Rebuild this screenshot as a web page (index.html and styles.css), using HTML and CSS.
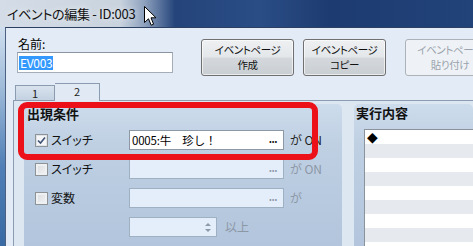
FILE: index.html
```html
<!DOCTYPE html>
<html lang="ja">
<head>
<meta charset="utf-8">
<link rel="stylesheet" href="styles.css">
</head>
<body>
<div class="window">
  <div class="titlebar"><span class="title">イベントの編集 - ID:003</span></div>
  <div class="frame">
    <div class="frame-edge"></div>
    <div class="content">
      <div class="top">
        <div class="name">
          <div class="name-label">名前:</div>
          <div class="name-input"><span class="sel">EV003</span></div>
        </div>
        <div class="buttons">
          <div class="btn btn-w1"><span class="bl">イベントページ</span><span class="bl">作成</span></div>
          <div class="btn btn-w2"><span class="bl">イベントページ</span><span class="bl">コピー</span></div>
          <div class="btn btn-w2 btn-disabled"><span class="bl">イベントページ</span><span class="bl">貼り付け</span></div>
        </div>
      </div>
      <div class="tabs">
        <div class="tab">1</div>
        <div class="tab tab-active">2</div>
      </div>
      <div class="panel">
        <div class="group group-left">
          <div class="group-title">出現条件</div>
          <div class="cond-grid">
            <div class="cond-label"><span class="cb cb-checked"><svg viewBox="0 0 9 9" width="9" height="9"><path d="M1 4.5 L3.5 7 L8 1.5" fill="none" stroke="#3f5276" stroke-width="1.6"/></svg></span>スイッチ</div>
            <div class="field"><span class="field-text">0005:牛　珍し！</span><span class="dots">...</span></div>
            <div class="suffix">が ON</div>

            <div class="cond-label"><span class="cb"></span>スイッチ</div>
            <div class="field field-disabled"><span class="field-text"></span><span class="dots dots-dis">...</span></div>
            <div class="suffix suffix-dis">が ON</div>

            <div class="cond-label"><span class="cb"></span>変数</div>
            <div class="field field-disabled"><span class="field-text"></span><span class="dots dots-dis">...</span></div>
            <div class="suffix suffix-dis">が</div>

            <div class="cond-label"></div>
            <div class="spin-row">
              <div class="spinner"><span class="spin-arrows"><span class="up"></span><span class="down"></span></span></div>
              <div class="suffix suffix-dis">以上</div>
            </div>
            <div></div>
          </div>
        </div>
        <div class="group group-right">
          <div class="group-title group-title-right">実行内容</div>
          <div class="listbox">
            <div class="lrow"><span class="diamond">◆</span></div>
            <div class="lrow"></div>
            <div class="lrow"></div>
            <div class="lrow"></div>
            <div class="lrow"></div>
            <div class="lrow"></div>
            <div class="lrow"></div>
            <div class="lrow"></div>
            <div class="lrow"></div>
          </div>
        </div>
      </div>
    </div>
  </div>
  <div class="redbox"></div>
  <svg class="cursor" width="13" height="21" viewBox="0 0 13 21"><path d="M0.5 0.5 L0.5 16.5 L4.5 12.8 L7.2 19.2 L9.6 18.2 L7 11.8 L12 11.8 Z" fill="#fff" stroke="#000" stroke-width="1"/></svg>
</div>
</body>
</html>
```
FILE: styles.css
```css
* { box-sizing: border-box; }
html, body { margin: 0; padding: 0; }
body {
  width: 473px;
  height: 246px;
  overflow: hidden;
  font-family: "Noto Sans CJK JP", "Liberation Sans", sans-serif;
  font-size: 12px;
  color: #000;
  font-feature-settings: "palt";
}
.window {
  position: relative;
  width: 473px;
  height: 246px;
  overflow: hidden;
  display: flex;
  flex-direction: column;
  background: #c9d9ec;
}
.titlebar {
  height: 27px;
  flex: none;
  display: flex;
  align-items: center;
  padding-left: 7px;
  background: linear-gradient(90deg, #d4dde7 0, #c9d3de 120px, #8ca0bd 145px, #24447a 175px, #2a4d86 260px, #1d3b70 330px, #21437a 473px);
}
.title {
  font-size: 13px;
  line-height: 16px;
  letter-spacing: -0.3px;
  color: #111;
  text-shadow: 0 0 6px rgba(255,255,255,0.8);
}
.frame {
  flex: 1;
  display: flex;
  min-height: 0;
}
.frame-edge {
  width: 5px;
  flex: none;
  background: linear-gradient(180deg, #cfdeee 0, #9fbbd9 60px, #4f7fb6 140px, #3a6aa3 218px);
}
.content {
  flex: 1;
  display: flex;
  flex-direction: column;
  background: #e3ecf6;
  border-left: 1px solid #4d6283;
  border-top: 1px solid #2c4064;
  min-width: 0;
}
.top {
  height: 55px;
  flex: none;
  display: flex;
  padding: 8px 0 0 11px;
}
.name { width: 156px; flex: none; }
.name-label {
  height: 16px;
  line-height: 16px;
  font-size: 12px;
  padding-left: 1px;
}
.name-input {
  height: 21px;
  background: #fff;
  border: 1px solid #a4adb8;
  border-top-color: #8b95a2;
  padding: 2px 1px;
  display: flex;
  align-items: center;
}
.sel {
  background: #3399ff;
  color: #fff;
  font-size: 12px;
  line-height: 14px;
  padding: 0 1px;
  letter-spacing: -0.3px;
}
.buttons {
  display: flex;
  margin-left: 28px;
  padding-top: 3px;
}
.btn {
  height: 37px;
  border: 1px solid #707070;
  border-radius: 3px;
  background: linear-gradient(180deg, #eef0f2 0, #e4e7ea 48%, #d4d8dc 52%, #c9ced3 100%);
  box-shadow: inset 0 0 0 1px rgba(255,255,255,0.6);
  font-size: 10.5px;
  letter-spacing: -0.4px;
  text-align: center;
  padding-top: 2px;
  color: #111;
  flex: none;
  display: flex;
  flex-direction: column;
  align-items: center;
  overflow: hidden;
}
.bl {
  display: block;
  height: 15px;
  line-height: 15px;
  white-space: nowrap;
}
.btn-w1 { width: 93px; }
.btn-w2 { width: 83px; margin-left: 9px; }
.btn-disabled {
  margin-left: 19px;
  width: 90px;
  border-color: #adb2b8;
  background: #eef2f6;
  box-shadow: none;
  color: #9aa3ad;
}
.tabs {
  height: 17px;
  flex: none;
  display: flex;
  align-items: flex-end;
  padding-left: 9px;
  position: relative;
  z-index: 1;
}
.tab {
  width: 40px;
  height: 15px;
  border: 1px solid #8b9bb0;
  border-bottom: none;
  background: linear-gradient(180deg, #d9e3ee 0, #c3d1e1 100%);
  text-align: center;
  font-size: 11px;
  line-height: 14px;
  color: #222;
}
.tab-active {
  width: 45px;
  height: 18px;
  margin-bottom: -1px;
  border-left: none;
  background: #e1eaf4;
}
.panel {
  flex: 1;
  display: flex;
  margin-left: 7px;
  border-top: 1px solid #8b9bb0;
  border-left: 1px solid #8b9bb0;
  background: #dde7f2;
  padding: 3px 0 0 10px;
  gap: 12px;
  min-height: 0;
}
.group {
  background: linear-gradient(180deg, #cddcec 0, #bfd0e3 40px, #b2c5dc 140px);
  border-radius: 5px 5px 0 0;
}
.group-left { width: 318px; flex: none; }
.group-right { flex: 1; min-width: 0; }
.group-title {
  font-weight: bold;
  font-size: 13px;
  line-height: 16px;
  padding: 2px 0 0 3px;
  color: #111;
}
.group-title-right { padding-left: 2px; padding-top: 1px; }
.cond-grid {
  display: grid;
  grid-template-columns: 94px 155px auto;
  grid-auto-rows: 20px;
  row-gap: 9px;
  padding-left: 11px;
  margin-top: 8px;
}
.cond-label {
  display: flex;
  align-items: center;
  font-size: 12px;
  line-height: 14px;
  color: #111;
}
.cb {
  width: 13px;
  height: 13px;
  border: 1px solid #8e9398;
  background: linear-gradient(135deg, #d8dadc 0, #f4f5f6 100%);
  box-shadow: inset 0 0 0 2px #eef0f2;
  margin-right: 3px;
  display: inline-flex;
  align-items: center;
  justify-content: center;
  flex: none;
}
.cb-checked { background: #f5f6f7; box-shadow: inset 0 0 0 1px #e0e3e6; }
.field {
  height: 20px;
  background: #fff;
  border: 1px solid #8c98a6;
  display: flex;
  align-items: center;
  padding: 0 6px 0 2px;
}
.field-text {
  flex: 1;
  font-size: 11.5px;
  line-height: 14px;
  letter-spacing: -0.2px;
  font-feature-settings: normal;
}
.dots {
  font-weight: bold;
  font-size: 10px;
  letter-spacing: -0.5px;
  line-height: 10px;
  color: #111;
  margin-top: -2px;
}
.dots-dis { color: #8d9aaa; }
.field-disabled {
  background: #e4eefa;
  border-color: #9fb0c3;
}
.suffix {
  font-size: 12px;
  line-height: 14px;
  margin-left: 6px;
  align-self: center;
  color: #222;
}
.suffix-dis { color: #8c97a6; }
.spin-row {
  grid-column: 2 / 4;
  display: flex;
  align-items: center;
}
.spinner {
  width: 88px;
  height: 20px;
  background: #e4eefa;
  border: 1px solid #9fb0c3;
  display: flex;
  justify-content: flex-end;
  align-items: center;
  padding-right: 5px;
  flex: none;
}
.spin-arrows {
  display: flex;
  flex-direction: column;
  gap: 3px;
}
.up, .down {
  width: 0;
  height: 0;
  border-left: 3px solid transparent;
  border-right: 3px solid transparent;
}
.up { border-bottom: 3px solid #8d99a8; }
.down { border-top: 3px solid #8d99a8; }
.spin-row .suffix { margin-left: 8px; }
.listbox {
  margin: 8px 0 0 10px;
  background: #fff;
  border-top: 1px solid #8a929c;
  border-left: 1px solid #8a929c;
  height: 200px;
}
.lrow {
  height: 14px;
  display: flex;
  align-items: center;
}
.lrow:nth-child(even) { background: #e6eaef; }
.diamond {
  font-size: 14px;
  line-height: 14px;
  margin-left: 2px;
  font-family: "DejaVu Sans", sans-serif;
}
.redbox {
  position: absolute;
  left: 18px;
  top: 102px;
  width: 300px;
  height: 58px;
  border: 6px solid #ec1118;
  border-radius: 9px;
}
.cursor {
  position: absolute;
  left: 144px;
  top: 6px;
}
```
